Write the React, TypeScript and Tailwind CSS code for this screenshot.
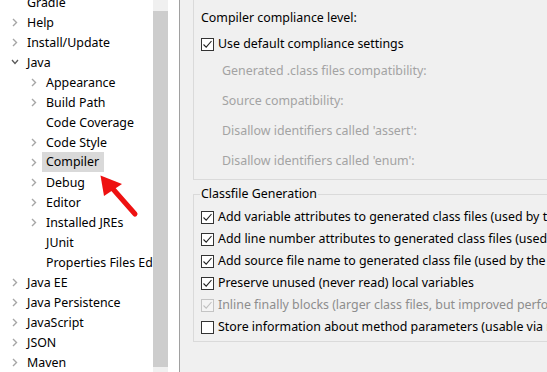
import React from "react";

type Node = { label: string; level: number; kind: "closed" | "open" | "leaf"; selected?: boolean };

const tree: Node[] = [
  { label: "Gradle", level: 1, kind: "leaf" },
  { label: "Help", level: 1, kind: "closed" },
  { label: "Install/Update", level: 1, kind: "closed" },
  { label: "Java", level: 1, kind: "open" },
  { label: "Appearance", level: 2, kind: "closed" },
  { label: "Build Path", level: 2, kind: "closed" },
  { label: "Code Coverage", level: 2, kind: "leaf" },
  { label: "Code Style", level: 2, kind: "closed" },
  { label: "Compiler", level: 2, kind: "closed", selected: true },
  { label: "Debug", level: 2, kind: "closed" },
  { label: "Editor", level: 2, kind: "closed" },
  { label: "Installed JREs", level: 2, kind: "closed" },
  { label: "JUnit", level: 2, kind: "leaf" },
  { label: "Properties Files Editor", level: 2, kind: "leaf" },
  { label: "Java EE", level: 1, kind: "closed" },
  { label: "Java Persistence", level: 1, kind: "closed" },
  { label: "JavaScript", level: 1, kind: "closed" },
  { label: "JSON", level: 1, kind: "closed" },
  { label: "Maven", level: 1, kind: "closed" },
];

const compliance = [
  "Generated .class files compatibility:",
  "Source compatibility:",
  "Disallow identifiers called 'assert':",
  "Disallow identifiers called 'enum':",
];

const classfile = [
  { label: "Add variable attributes to generated class files (used by the debugger)", checked: true },
  { label: "Add line number attributes to generated class files (used by the debugger)", checked: true },
  { label: "Add source file name to generated class file (used by the debugger)", checked: true },
  { label: "Preserve unused (never read) local variables", checked: true },
  { label: "Inline finally blocks (larger class files, but improved performance)", checked: true, disabled: true },
  { label: "Store information about method parameters (usable via reflection)", checked: false },
];

function Chevron({ kind }: { kind: Node["kind"] }) {
  if (kind === "leaf") return null;
  if (kind === "open")
    return (
      <svg width="8" height="6" viewBox="0 0 8 6" className="ml-[3px]">
        <polyline points="1,1 4,4.5 7,1" fill="none" stroke="#5a5a5a" strokeWidth="1.3" />
      </svg>
    );
  return (
    <svg width="6" height="9" viewBox="0 0 6 9" className="ml-[4px]">
      <polyline points="1,1 4.5,4.5 1,8" fill="none" stroke="#a6a6a6" strokeWidth="1.4" />
    </svg>
  );
}

function Checkbox({ checked, disabled }: { checked: boolean; disabled?: boolean }) {
  return (
    <div
      className={
        "w-[13px] h-[13px] shrink-0 border flex items-center justify-center " +
        (disabled ? "border-[#c4c4c4] bg-[#f4f4f4]" : "border-[#333333] bg-white")
      }
    >
      {checked && (
        <svg width="11" height="11" viewBox="0 0 11 11">
          <polyline
            points="1.5,5.5 4.2,8.2 9.5,2"
            fill="none"
            stroke={disabled ? "#c0c0c0" : "#222222"}
            strokeWidth="1.1"
          />
        </svg>
      )}
    </div>
  );
}

export default function App() {
  return (
    <div
      className="flex w-[547px] h-[372px] overflow-hidden bg-white text-[12.4px] text-black"
      style={{ fontFamily: '"Noto Sans", "Open Sans", sans-serif' }}
    >
      {/* Tree */}
      <div className="relative flex w-[180px] shrink-0 border-r border-[#a0a0a0]">
        <div className="w-[153px] shrink-0 overflow-hidden">
          <div className="mt-[-8px] flex flex-col">
            {tree.map((n) => (
              <div
                key={n.label}
                className={"flex items-center h-[20px] " + (n.level === 1 ? "pl-[8px]" : "pl-[27px]")}
              >
                <div className="w-[19px] shrink-0 flex items-center">
                  <Chevron kind={n.kind} />
                </div>
                <span
                  className={
                    "shrink-0 whitespace-nowrap leading-[19px] " +
                    (n.selected ? "bg-[#d9d9d9] -ml-[4px] pl-[4px] pr-[5px] h-[20px] leading-[20px]" : "")
                  }
                >
                  {n.label}
                </span>
              </div>
            ))}
          </div>
        </div>
        <div className="w-[15px] shrink-0 bg-[#f0f0f0] flex flex-col">
          <div className="mt-[11px] h-[356px] bg-[#cdcdcd]" />
        </div>
        <div className="flex-1 bg-white" />

        <svg
          className="absolute left-0 top-0 pointer-events-none"
          width="180"
          height="372"
          viewBox="0 0 180 372"
        >
          <line x1="135" y1="214" x2="113" y2="189" stroke="#ee1111" strokeWidth="5" strokeLinecap="round" />
          <polygon points="100.5,175.5 104,196 122,184" fill="#ee1111" />
        </svg>
      </div>

      {/* Settings page */}
      <div className="flex-1 bg-[#f0f0f0] pl-[13px] flex flex-col overflow-hidden">
        <div className="h-[180px] shrink-0 border-l border-b border-[#dadada] pl-[7px] flex flex-col">
          <div className="mt-[10px] h-[16px] leading-[16px] whitespace-nowrap">Compiler compliance level:</div>
          <div className="mt-[12px] flex items-center gap-[4px] h-[13px]">
            <Checkbox checked />
            <span className="whitespace-nowrap">Use default compliance settings</span>
          </div>
          <div className="mt-[5px] pl-[21px] flex flex-col text-[#a3a3a3]">
            {compliance.map((c) => (
              <div key={c} className="h-[30px] leading-[30px] whitespace-nowrap">
                {c}
              </div>
            ))}
          </div>
        </div>

        <div className="mt-[14px] h-[148px] shrink-0 border-l border-t border-b border-[#dadada] relative flex flex-col pl-[7px]">
          <div className="absolute left-[6px] top-[-9px] px-[1px] bg-[#f0f0f0] leading-[16px] whitespace-nowrap">
            Classfile Generation
          </div>
          <div className="mt-[16px] flex flex-col gap-[9px]">
            {classfile.map((c) => (
              <div key={c.label} className="flex items-center gap-[4px] h-[13px]">
                <Checkbox checked={c.checked} disabled={c.disabled} />
                <span className={"whitespace-nowrap " + (c.disabled ? "text-[#8d8d8d]" : "")}>{c.label}</span>
              </div>
            ))}
          </div>
        </div>
      </div>
    </div>
  );
}
